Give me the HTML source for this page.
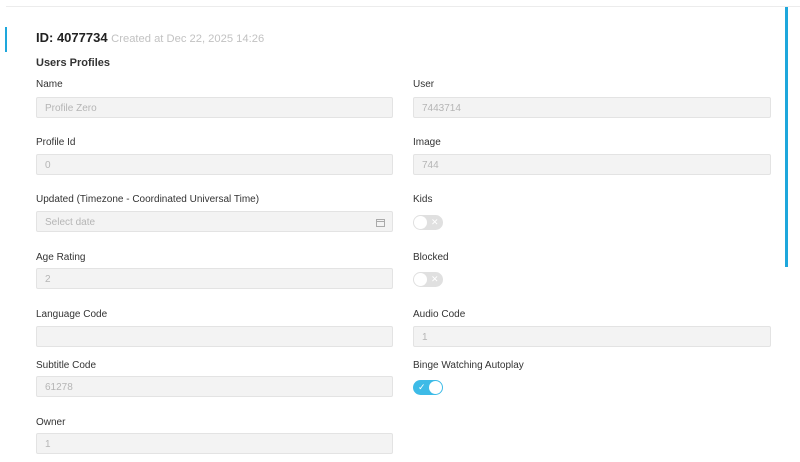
<!DOCTYPE html>
<html><head><style>
*{box-sizing:border-box;margin:0;padding:0}
body{width:800px;height:462px;background:#fff;font-family:"Liberation Sans",sans-serif;position:relative;overflow:hidden;color:#333}
.topline{position:absolute;left:6px;top:6px;width:794px;height:1px;background:#ececec}
.lb{position:absolute;left:5px;top:27px;width:2px;height:25px;background:#1ea7dc}
.rb{position:absolute;left:785px;top:7px;width:3px;height:260px;background:#1ea7dc}
.t{position:absolute;font-size:10px;color:#333;white-space:nowrap}
.in{position:absolute;height:21px;background:#f3f3f3;border:1px solid #e3e3e3;border-radius:2px;font-size:10px;color:#b5b5b5;padding-left:8px;line-height:21px}
.l{left:36px;width:357px}.r{left:413px;width:358px}
.tg{position:absolute;left:413px;width:30px;height:15px;border-radius:8px;background:#e0e0e0}
.tg::before{content:"";position:absolute;left:1px;top:1px;width:13px;height:13px;border-radius:50%;background:#fff}
.tg span{position:absolute;left:18px;top:0;font-size:9px;color:#fff;line-height:15px}
.tg.on{background:#3dbbe7}.tg.on::before{left:16px}.tg.on span{left:5px}
</style></head><body>
<div class="topline"></div><div class="lb"></div><div class="rb"></div>
<div class="t" style="left:36px;top:30px;font-size:13px;font-weight:bold;color:#222">ID: 4077734 <span style="font-weight:normal;font-size:11.2px;color:#c2c2c2">Created at Dec 22, 2025 14:26</span></div>
<div class="t" style="left:36px;top:57px;font-size:11px;font-weight:bold;color:#333">Users Profiles</div>
<div class="t" style="left:36px;top:79px">Name</div><div class="in l" style="top:97px">Profile Zero</div>
<div class="t" style="left:413px;top:79px">User</div><div class="in r" style="top:97px">7443714</div>
<div class="t" style="left:36px;top:137px">Profile Id</div><div class="in l" style="top:154px">0</div>
<div class="t" style="left:413px;top:137px">Image</div><div class="in r" style="top:154px">744</div>
<div class="t" style="left:36px;top:194px">Updated (Timezone - Coordinated Universal Time)</div>
<div class="in l" style="top:211px">Select date<svg style="position:absolute;right:7px;top:6px" width="9" height="9" viewBox="0 0 9 9"><rect x="0.5" y="1.5" width="8" height="7" fill="none" stroke="#aaa"/><line x1="0.5" y1="3.5" x2="8.5" y2="3.5" stroke="#aaa"/></svg></div>
<div class="t" style="left:413px;top:194px">Kids</div><div class="tg" style="top:215px"><span>✕</span></div>
<div class="t" style="left:36px;top:252px">Age Rating</div><div class="in l" style="top:268px">2</div>
<div class="t" style="left:413px;top:252px">Blocked</div><div class="tg" style="top:272px"><span>✕</span></div>
<div class="t" style="left:36px;top:309px">Language Code</div><div class="in l" style="top:326px"></div>
<div class="t" style="left:413px;top:309px">Audio Code</div><div class="in r" style="top:326px">1</div>
<div class="t" style="left:36px;top:360px">Subtitle Code</div><div class="in l" style="top:376px">61278</div>
<div class="t" style="left:413px;top:360px">Binge Watching Autoplay</div><div class="tg on" style="top:380px"><span>✓</span></div>
<div class="t" style="left:36px;top:417px">Owner</div><div class="in l" style="top:433px">1</div>
</body></html>
